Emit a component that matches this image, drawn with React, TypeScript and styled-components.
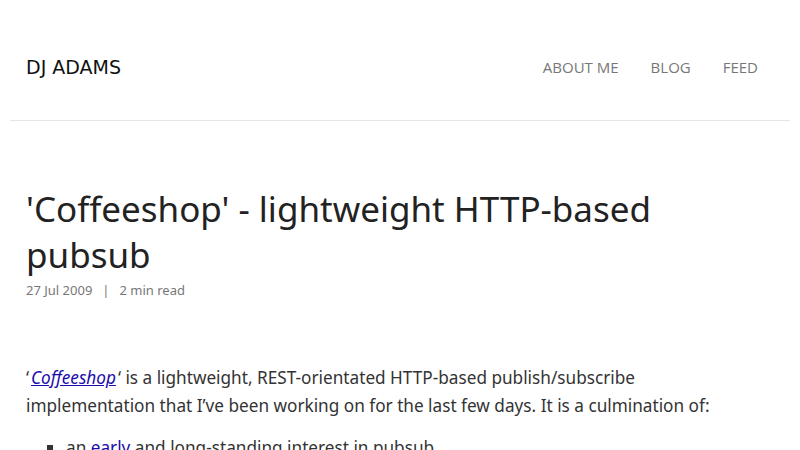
import React from "react";
import styled, { createGlobalStyle } from "styled-components";

const Global = createGlobalStyle`
  html, body { margin: 0; padding: 0; background: #fff; }
  body { font-family: "Noto Sans", sans-serif; color: #222; overflow: hidden; }
`;

const Page = styled.div`
  padding: 0 10px;
`;

const Header = styled.header`
  display: flex;
  align-items: center;
  justify-content: space-between;
  height: 121px;
  padding: 14px 32px 0 16px;
  border-bottom: 1px solid #e5e5e5;
  box-sizing: border-box;
`;

const Logo = styled.a`
  font-family: "DejaVu Sans", sans-serif;
  font-size: 19px;
  color: #111;
  text-decoration: none;
`;

const Nav = styled.nav`
  display: flex;
  gap: 32px;
`;

const NavLink = styled.a`
  font-family: "Open Sans", sans-serif;
  font-size: 15px;
  color: #777;
  text-decoration: none;
`;

const Article = styled.article`
  padding: 65px 16px 0;
`;

const Title = styled.h1`
  margin: 0;
  font-weight: 400;
  font-size: 35px;
  line-height: 46px;
  color: #222;
`;

const Meta = styled.div`
  display: flex;
  gap: 10px;
  font-size: 13px;
  color: #777;
  margin-top: 3px;
`;

const Body = styled.div`
  margin-top: 65px;
  max-width: 730px;
  font-size: 17.2px;
  line-height: 28px;
  color: #333;
`;

const P = styled.p`
  margin: 0 0 14px;
`;

const Link = styled.a<{ $italic?: boolean }>`
  color: #1a0dab;
  font-style: ${(p) => (p.$italic ? "italic" : "normal")};
  padding: ${(p) => (p.$italic ? "0 2px" : "0")};
`;

const List = styled.ul`
  margin: 0;
  padding-left: 40px;
  list-style: square;
`;

export default function App() {
  return (
    <>
      <Global />
      <Page>
        <Header>
          <Logo href="#">DJ ADAMS</Logo>
          <Nav>
            <NavLink href="#">ABOUT ME</NavLink>
            <NavLink href="#">BLOG</NavLink>
            <NavLink href="#">FEED</NavLink>
          </Nav>
        </Header>
        <Article>
          <Title>'Coffeeshop' - lightweight HTTP-based pubsub</Title>
          <Meta>
            <span>27 Jul 2009</span>
            <span>|</span>
            <span>2 min read</span>
          </Meta>
          <Body>
            <P>
              ‘<Link $italic href="#">Coffeeshop</Link>‘ is a lightweight, REST-orientated HTTP-based publish/subscribe
              implementation that I’ve been working on for the last few days. It is a culmination of:
            </P>
            <List>
              <li>
                an <Link href="#">early</Link> and long-standing interest in pubsub
              </li>
            </List>
          </Body>
        </Article>
      </Page>
    </>
  );
}
